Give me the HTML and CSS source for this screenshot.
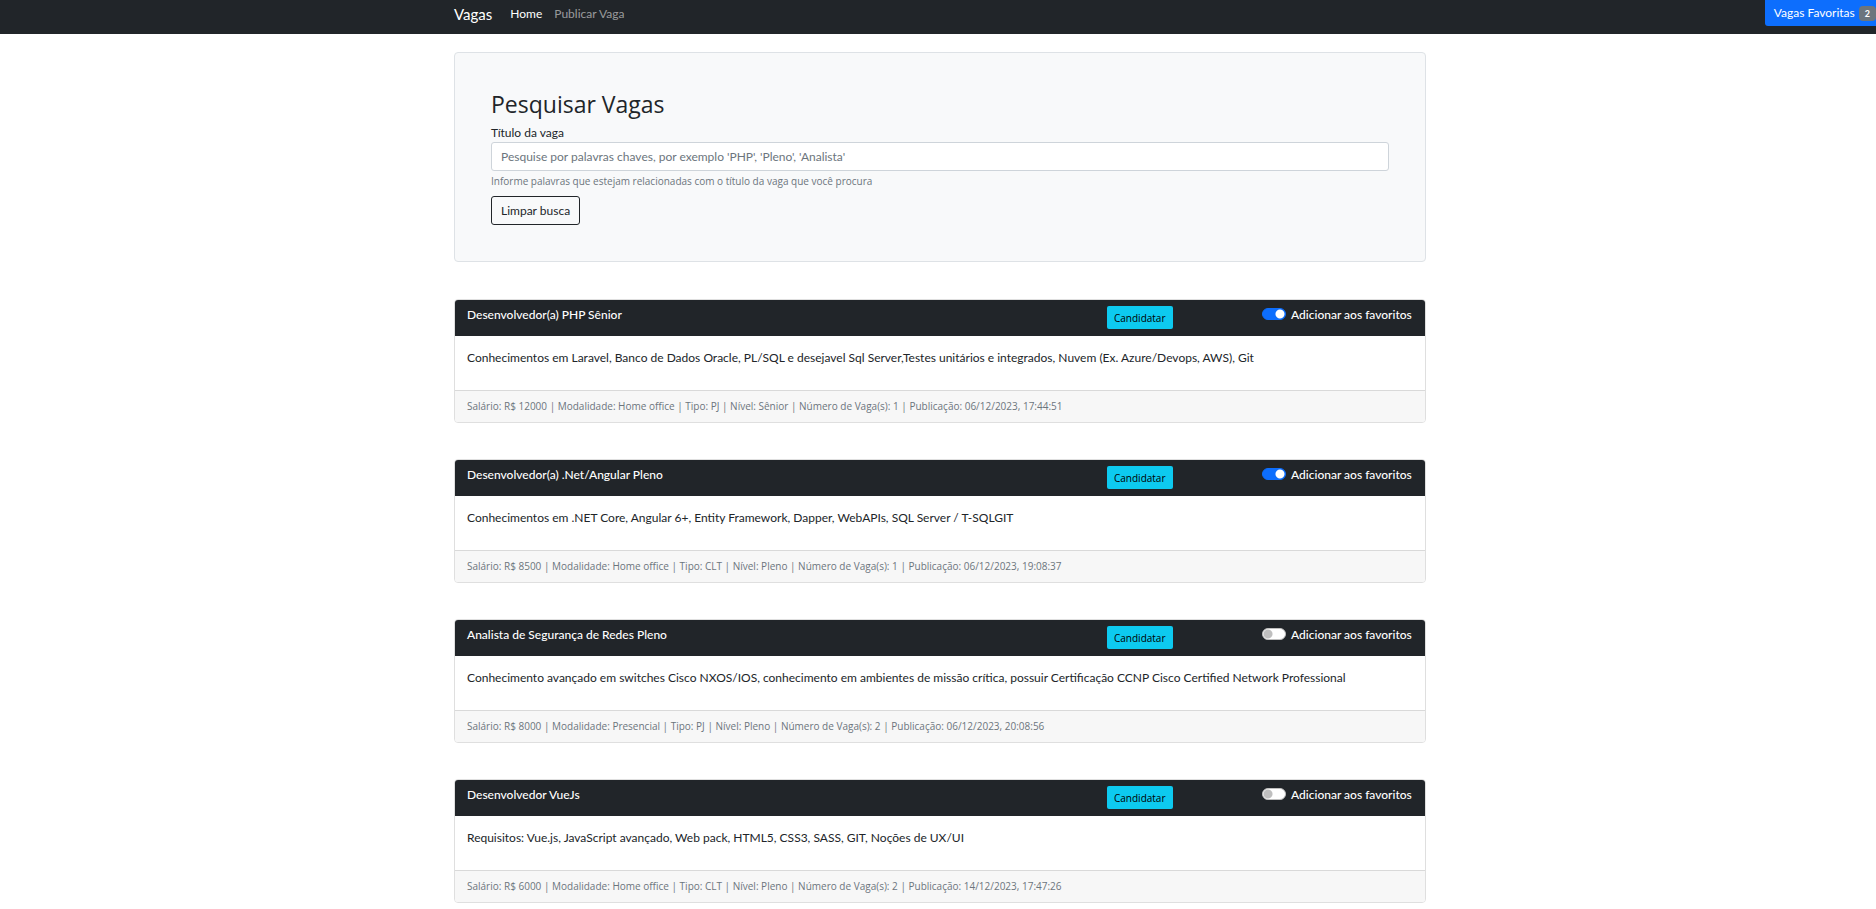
FILE: index.html
```html
<!DOCTYPE html>
<html lang="pt-BR">
<head>
<meta charset="utf-8">
<meta name="viewport" content="width=device-width, initial-scale=1">
<title>Vagas</title>
<link rel="stylesheet" href="styles.css">
</head>
<body>
<header class="navbar">
  <nav class="container navbar-row">
    <a class="brand" href="#">Vagas</a>
    <a class="nav-link active" href="#">Home</a>
    <a class="nav-link" href="#">Publicar Vaga</a>
  </nav>
  <button class="favorites" type="button">Vagas Favoritas <span class="badge">2</span></button>
</header>
<main class="container">
  <form class="search">
    <h1 class="search-title">Pesquisar Vagas</h1>
    <label class="search-label" for="titulo">Título da vaga</label>
    <input class="search-input" id="titulo" type="text" placeholder="Pesquise por palavras chaves, por exemplo 'PHP', 'Pleno', 'Analista'">
    <p class="search-help">Informe palavras que estejam relacionadas com o título da vaga que você procura</p>
    <button class="clear" type="button">Limpar busca</button>
  </form>
  <section class="jobs">
    <article class="card">
      <div class="card-header">
        <h2 class="card-title">Desenvolvedor(a) PHP Sênior</h2>
        <div><button class="apply" type="button">Candidatar</button></div>
        <label class="favorite"><input class="switch" type="checkbox" checked>Adicionar aos favoritos</label>
      </div>
      <p class="card-body">Conhecimentos em Laravel, Banco de Dados Oracle, PL/SQL e desejavel Sql Server,Testes unitários e integrados, Nuvem (Ex. Azure/Devops, AWS), Git</p>
      <footer class="card-footer">Salário: R$ 12000 | Modalidade: Home office | Tipo: PJ | Nível: Sênior | Número de Vaga(s): 1 | Publicação: 06/12/2023, 17:44:51</footer>
    </article>
    <article class="card">
      <div class="card-header">
        <h2 class="card-title">Desenvolvedor(a) .Net/Angular Pleno</h2>
        <div><button class="apply" type="button">Candidatar</button></div>
        <label class="favorite"><input class="switch" type="checkbox" checked>Adicionar aos favoritos</label>
      </div>
      <p class="card-body">Conhecimentos em .NET Core, Angular 6+, Entity Framework, Dapper, WebAPIs, SQL Server / T-SQLGIT</p>
      <footer class="card-footer">Salário: R$ 8500 | Modalidade: Home office | Tipo: CLT | Nível: Pleno | Número de Vaga(s): 1 | Publicação: 06/12/2023, 19:08:37</footer>
    </article>
    <article class="card">
      <div class="card-header">
        <h2 class="card-title">Analista de Segurança de Redes Pleno</h2>
        <div><button class="apply" type="button">Candidatar</button></div>
        <label class="favorite"><input class="switch" type="checkbox">Adicionar aos favoritos</label>
      </div>
      <p class="card-body">Conhecimento avançado em switches Cisco NXOS/IOS, conhecimento em ambientes de missão crítica, possuir Certificação CCNP Cisco Certified Network Professional</p>
      <footer class="card-footer">Salário: R$ 8000 | Modalidade: Presencial | Tipo: PJ | Nível: Pleno | Número de Vaga(s): 2 | Publicação: 06/12/2023, 20:08:56</footer>
    </article>
    <article class="card">
      <div class="card-header">
        <h2 class="card-title">Desenvolvedor VueJs</h2>
        <div><button class="apply" type="button">Candidatar</button></div>
        <label class="favorite"><input class="switch" type="checkbox">Adicionar aos favoritos</label>
      </div>
      <p class="card-body">Requisitos: Vue.js, JavaScript avançado, Web pack, HTML5, CSS3, SASS, GIT, Noções de UX/UI</p>
      <footer class="card-footer">Salário: R$ 6000 | Modalidade: Home office | Tipo: CLT | Nível: Pleno | Número de Vaga(s): 2 | Publicação: 14/12/2023, 17:47:26</footer>
    </article>
  </section>
</main>
</body>
</html>
```
FILE: styles.css
```css
* { box-sizing: border-box; }

body {
  margin: 0;
  background: #fff;
  color: #212529;
  font: 12px/18px Lato, "Open Sans", sans-serif;
}

button, input { font: inherit; }
h1, h2, p { margin: 0; }

.container {
  width: 100%;
  max-width: 990px;
  margin: 0 auto;
  padding: 0 7px 0 11px;
}

.navbar {
  position: relative;
  background: #212529;
  padding: 3px 0 9px;
}
.navbar-row { display: flex; align-items: center; }
.brand {
  margin-right: 18px;
  color: #fff;
  font-size: 15px;
  line-height: 22px;
  text-decoration: none;
}
.nav-link {
  margin-right: 12px;
  color: rgba(255, 255, 255, .55);
  text-decoration: none;
}
.nav-link.active { color: #fff; }

.favorites {
  position: absolute;
  top: 0;
  right: 0;
  display: flex;
  align-items: center;
  gap: 4px;
  padding: 4px 0 4px 9px;
  border: 0;
  border-radius: 0 0 0 3px;
  background: #0d6efd;
  color: #fff;
}
.badge {
  padding: 0 6px;
  border-radius: 4px;
  background: #6c757d;
  font-size: 9px;
  font-weight: 700;
  line-height: 15px;
}

.search {
  margin-top: 18px;
  padding: 37px 36px 36px;
  border: 1px solid #dee2e6;
  border-radius: 4px;
  background: #f8f9fa;
}
.search-title {
  margin-bottom: 5px;
  font-family: "Open Sans", sans-serif;
  font-size: 23px;
  font-weight: 500;
  line-height: 29px;
}
.search-label { display: block; }
.search-input {
  display: block;
  width: 100%;
  height: 29px;
  padding: 4px 9px;
  border: 1px solid #ced4da;
  border-radius: 3px;
  background: #fff;
  color: #212529;
}
.search-input::placeholder { color: #6c757d; opacity: 1; }
.search-help {
  margin: 2px 0 7px;
  color: #6c757d;
  font-family: "Open Sans", sans-serif;
  font-size: 10px;
  line-height: 16px;
}
.clear {
  display: block;
  height: 29px;
  padding: 0 9px;
  border: 1px solid #212529;
  border-radius: 3px;
  background: transparent;
  color: #212529;
}

.jobs {
  display: grid;
  gap: 36px;
  padding: 37px 0 0;
}
.card {
  overflow: hidden;
  border: 1px solid #dfdfdf;
  border-radius: 4px;
}
.card-header {
  display: grid;
  grid-template-columns: 1fr 155px 151px;
  padding: 6px 12px 7px;
  background: #212529;
  color: #fff;
}
.card-title { font-size: 12px; font-weight: 500; line-height: 18px; }
.apply {
  display: block;
  height: 23px;
  padding: 0 7px;
  border: 0;
  border-radius: 2px;
  background: #0dcaf0;
  color: #000;
  font-family: "Open Sans", sans-serif;
  font-size: 10px;
}
.favorite {
  display: flex;
  gap: 5px;
  font-weight: 500;
  white-space: nowrap;
}
.switch {
  flex: none;
  appearance: none;
  width: 24px;
  height: 12px;
  margin: 2px 0 0;
  border: 1px solid #bfbfbf;
  border-radius: 6px;
  background: #fff radial-gradient(circle at 5px 5px, #bfbfbf 4px, transparent 5px);
}
.switch:checked {
  border-color: #0d6efd;
  background: #0d6efd radial-gradient(circle at 17px 5px, #fff 4px, transparent 5px);
}
.card-body { padding: 13px 12px 23px; }
.card-footer {
  padding: 7px 12px 8px;
  border-top: 1px solid #d9d9d9;
  background: #f7f7f7;
  color: #6c757d;
  font-family: "Open Sans", sans-serif;
  font-size: 10px;
  line-height: 16px;
}
```
